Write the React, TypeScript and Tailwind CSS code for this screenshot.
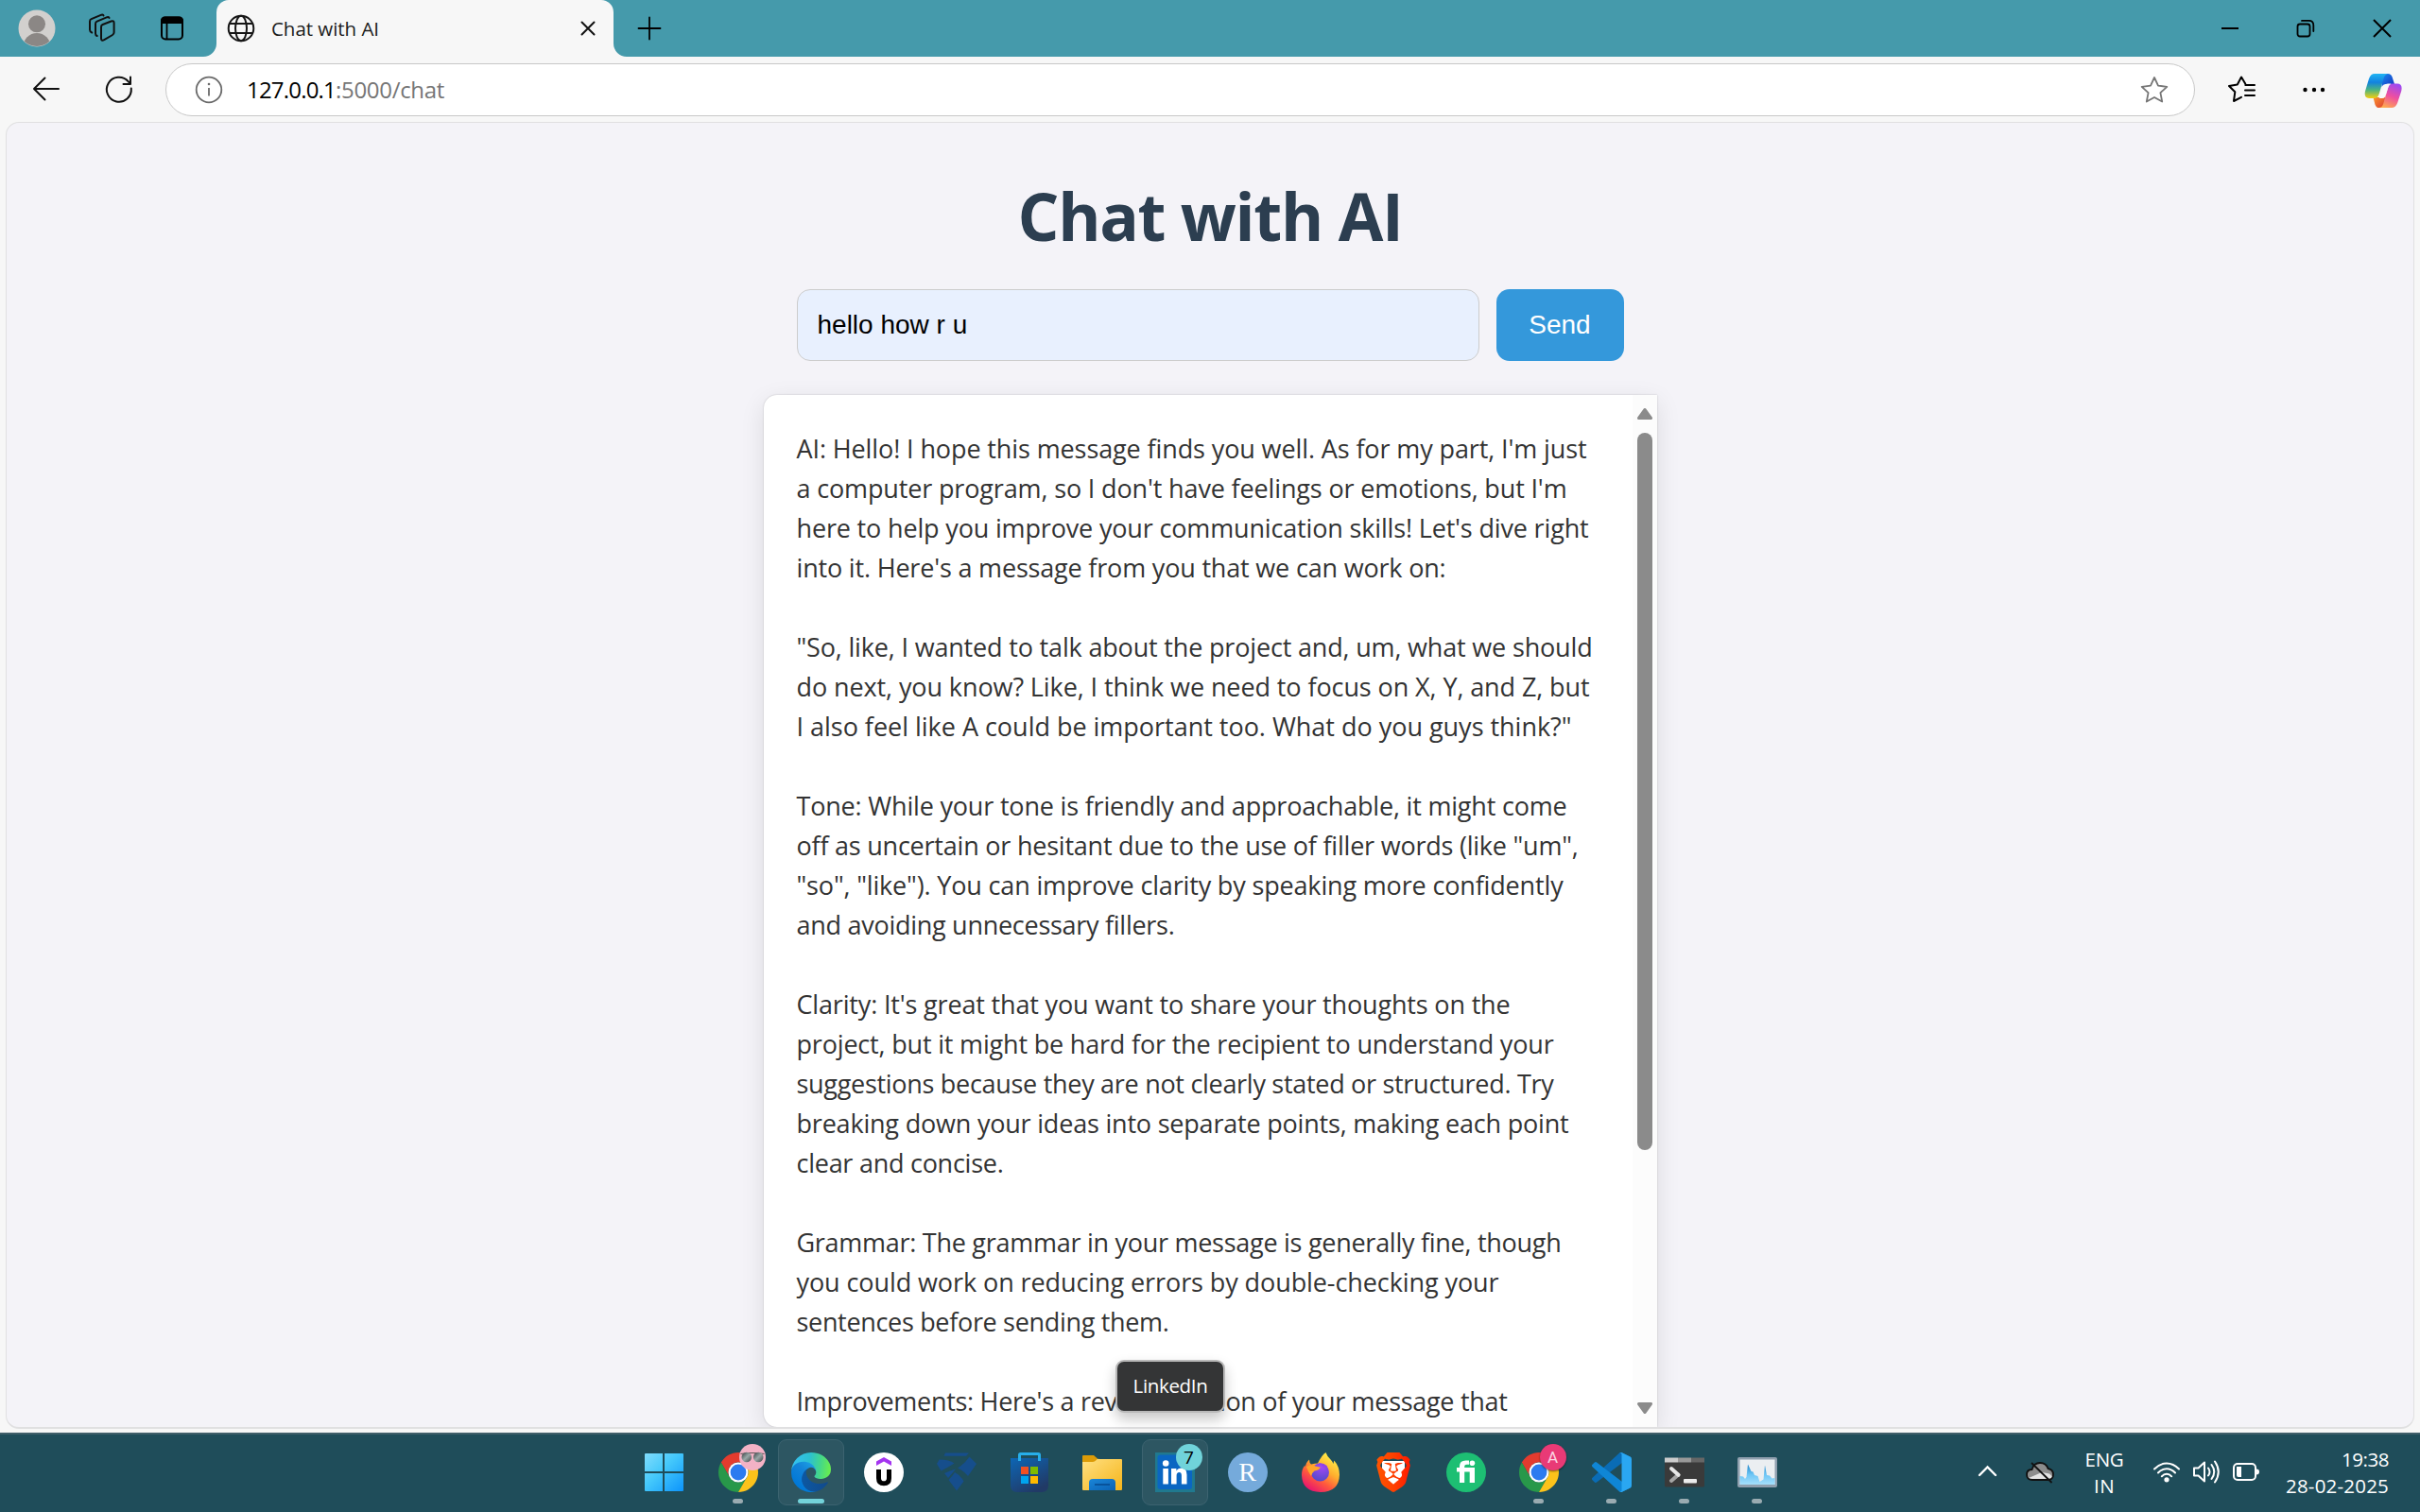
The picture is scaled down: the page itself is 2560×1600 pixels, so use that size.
import React, { useLayoutEffect, useRef, useState } from "react";
import { SiBrave } from "react-icons/si";

/* Text on one line, with tracking spread so that it fills the given width. */
function Fit({ w, children, className = "" }: { w: number; children: string; className?: string }) {
  const ref = useRef<HTMLSpanElement>(null);
  const [spacing, setSpacing] = useState(0);
  useLayoutEffect(() => {
    const el = ref.current;
    if (el) setSpacing((w - el.getBoundingClientRect().width) / children.length);
  }, []);
  return (
    <span ref={ref} className={`inline-block whitespace-pre ${className}`} style={{ letterSpacing: spacing }}>
      {children}
    </span>
  );
}

const message: [string, number][][] = [
  [
    ["AI: Hello! I hope this message finds you well. As for my part, I'm just", 836],
    ["a computer program, so I don't have feelings or emotions, but I'm", 815],
    ["here to help you improve your communication skills! Let's dive right", 838],
    ["into it. Here's a message from you that we can work on:", 687],
  ],
  [
    ["\"So, like, I wanted to talk about the project and, um, what we should", 842],
    ["do next, you know? Like, I think we need to focus on X, Y, and Z, but", 839],
    ["I also feel like A could be important too. What do you guys think?\"", 820],
  ],
  [
    ["Tone: While your tone is friendly and approachable, it might come", 815],
    ["off as uncertain or hesitant due to the use of filler words (like \"um\",", 827],
    ["\"so\", \"like\"). You can improve clarity by speaking more confidently", 811],
    ["and avoiding unnecessary fillers.", 400],
  ],
  [
    ["Clarity: It's great that you want to share your thoughts on the", 755],
    ["project, but it might be hard for the recipient to understand your", 801],
    ["suggestions because they are not clearly stated or structured. Try", 801],
    ["breaking down your ideas into separate points, making each point", 817],
    ["clear and concise.", 219],
  ],
  [
    ["Grammar: The grammar in your message is generally fine, though", 809],
    ["you could work on reducing errors by double-checking your", 743],
    ["sentences before sending them.", 394],
  ],
  [["Improvements: Here's a revised version of your message that", 752]],
];

/* ---------- browser frame ---------- */

function TitleBar() {
  return (
    <div className="flex h-[60px] shrink-0 items-center bg-[#459aab]">
      <svg className="ml-[19px] size-[40px]" viewBox="0 0 40 40">
        <defs>
          <clipPath id="av"><circle cx="20" cy="20" r="19" /></clipPath>
        </defs>
        <circle cx="20" cy="20" r="19.5" fill="#d2d0ce" />
        <g clipPath="url(#av)" fill="#8b8785">
          <circle cx="20" cy="15.3" r="9" />
          <circle cx="20" cy="39.5" r="14.5" />
        </g>
      </svg>
      <svg className="ml-[34px] size-[32px]" viewBox="0 0 32 32" fill="none" stroke="#111" strokeWidth="2" strokeLinejoin="round" strokeLinecap="round">
        <path d="M14 14.500q0-1.800 1.600-2.500l9-3.500q3-1 3 1.800v10q0 1.800-1.600 2.700l-8.800 5.200q-3.200 1.500-3.200-1.500z" />
        <path d="M9.700 24q-1.700-.7-1.700-2.600V11.200q0-1.800 1.600-2.500l10.800-4.500q1.700-.6 2.100.9" />
        <path d="M4.200 20.500q-2.200-.9-2.200-2.900V8.700q0-1.800 1.600-2.500l10.800-4.500q1.700-.6 2.100.9" />
      </svg>
      <svg className="ml-[43px] size-[28px]" viewBox="0 0 28 28">
        <rect x="3" y="2.500" width="22" height="23" rx="4" fill="none" stroke="#000" strokeWidth="2" />
        <path d="M2 9V6q0-4.500 4.500-4.500h15Q26 1.500 26 6v3z" />
        <path d="M8.500 9v16" stroke="#000" strokeWidth="1.800" />
      </svg>
      <div className="relative ml-[33px] flex h-[60px] w-[420px] items-center rounded-t-[13px] bg-[#f7f7f7]">
        <svg className="absolute bottom-0 -left-[14px] size-[14px]" viewBox="0 0 14 14"><path d="M14 0v14H0A14 14 0 0 0 14 0z" fill="#f7f7f7" /></svg>
        <svg className="absolute -right-[14px] bottom-0 size-[14px]" viewBox="0 0 14 14"><path d="M0 0v14h14A14 14 0 0 1 0 0z" fill="#f7f7f7" /></svg>
        <svg className="ml-[11px] size-[30px]" viewBox="0 0 30 30" fill="none" stroke="#161616" strokeWidth="2">
          <circle cx="15" cy="15" r="13.300" />
          <ellipse cx="15" cy="15" rx="6" ry="13.300" />
          <path d="M2.500 10h25M2.500 20h25" />
        </svg>
        <div className="ml-[17px] w-[320px] text-[20.500px] leading-[30px] text-[#1b1b1b]"><Fit w={114}>Chat with AI</Fit></div>
        <svg className="ml-[6px] size-[18px]" viewBox="0 0 18 18" stroke="#111" strokeWidth="2" strokeLinecap="round"><path d="M2.500 2.500l13 13M15.500 2.500l-13 13" /></svg>
      </div>
      <svg className="ml-[25px] size-[26px]" viewBox="0 0 26 26" stroke="#000" strokeWidth="1.800" strokeLinecap="round"><path d="M13 1.500v23M1.500 13h23" /></svg>
      <div className="ml-auto flex items-center">
        <svg className="size-[20px]" viewBox="0 0 20 20"><path d="M1 10h18" stroke="#000" strokeWidth="2" /></svg>
        <svg className="ml-[60px] size-[20px]" viewBox="0 0 20 20" fill="none" stroke="#000" strokeWidth="1.800" strokeLinecap="round">
          <rect x="1.500" y="5.500" width="13" height="13" rx="2.500" />
          <path d="M6 1.900h7.500q4.800 0 4.800 4.800V13" />
        </svg>
        <svg className="mr-[30px] ml-[61px] size-[20px]" viewBox="0 0 20 20" stroke="#000" strokeWidth="2"><path d="M1 1l18 18M19 1L1 19" /></svg>
      </div>
    </div>
  );
}

function CopilotIcon() {
  return (
    <svg className="mt-px ml-[41px] h-[38px] w-[40px]" viewBox="0 0 40 38">
      <defs>
        <linearGradient id="cpa" x1="0" y1="0" x2="0" y2="1"><stop offset="0" stopColor="#21b5f3" /><stop offset=".35" stopColor="#1282e0" /><stop offset=".65" stopColor="#49b383" /><stop offset="1" stopColor="#f5cf10" /></linearGradient>
        <linearGradient id="cpb" x1=".7" y1="0" x2=".3" y2="1"><stop offset="0" stopColor="#9f49f0" /><stop offset=".5" stopColor="#ee4fa0" /><stop offset="1" stopColor="#ffab4d" /></linearGradient>
        <linearGradient id="cpc" x1="0" y1="0" x2="1" y2="1"><stop offset="0" stopColor="#1d8cf0" /><stop offset="1" stopColor="#1430bd" /></linearGradient>
        <linearGradient id="cpd" x1="0" y1="0" x2="1" y2="1"><stop offset="0" stopColor="#ffa030" /><stop offset="1" stopColor="#dc3c30" /></linearGradient>
      </defs>
      <path d="M19 1h6q3.500 0 4.600 3.600L32 12h-9q-3 0-4.500 3z" fill="url(#cpc)" />
      <path d="M21 37h-5q-3.500 0-4.600-3.600L9.500 26h8.500q3 0 4.500-3z" fill="url(#cpd)" />
      <path d="M11 1h15q-4 0-5.300 4.500l-5 17Q14.300 27 10.500 27H5q-5.500 0-4-7.500l4-13.200Q6.800 1 11 1z" fill="url(#cpa)" />
      <path d="M29 37H15q4 0 5.300-4.500l4.700-16Q26.200 11.500 30 11.500h5q6 0 4.200 8l-4 12.200Q33.300 37 29 37z" fill="url(#cpb)" />
      <path d="M21.500 13.500q1-2 3.500-2h3.500q-2.500 1-3.500 5L22 25.500q-.8 1.500-3 1.500h-3.500q2-1.500 2.500-4z" fill="#fafafa" />
    </svg>
  );
}

function Toolbar() {
  return (
    <div className="flex h-[69px] shrink-0 items-center bg-[#f7f7f7] pt-[1px]">
      <svg className="ml-[33px] size-[32px]" viewBox="0 0 32 32" fill="none" stroke="#111" strokeWidth="2" strokeLinecap="round" strokeLinejoin="round"><path d="M29 15H3M14.500 3.500L3 15l11.500 11.500" /></svg>
      <svg className="ml-[45px] size-[32px]" viewBox="0 0 32 32" fill="none" stroke="#111" strokeWidth="2" strokeLinecap="round" strokeLinejoin="round"><path d="M28.800 14.500A13 13 0 1 1 25.500 7l2 2.500M28 2.500V10h-7.500" /></svg>
      <div className="ml-[33px] flex h-[56px] w-[2147px] items-center rounded-full border border-[#c8c8c8] bg-white">
        <svg className="ml-[30px] size-[30px]" viewBox="0 0 30 30" fill="none" stroke="#6b6b6b" strokeWidth="1.800">
          <circle cx="15" cy="15" r="13.300" />
          <path d="M15 13v8.500" />
          <circle cx="15" cy="9" r="1.300" fill="#6b6b6b" stroke="none" />
        </svg>
        <div className="ml-[25px] flex w-[600px] text-[24px] leading-[34px] text-[#767676]">
          <Fit w={94} className="text-black">127.0.0.1</Fit>
          <Fit w={115}>:5000/chat</Fit>
        </div>
        <svg className="mr-[27px] ml-auto size-[30px]" viewBox="0 0 30 30" fill="none" stroke="#767676" strokeWidth="1.800" strokeLinejoin="round">
          <path d="M15 2l4 8.600 9.300 1.200-6.900 6.400 1.800 9.300L15 23l-8.200 4.500 1.800-9.300-6.900-6.400L11 10.600z" />
        </svg>
      </div>
      <svg className="ml-[34px] size-[30px]" viewBox="0 0 30 30" fill="none" stroke="#000" strokeWidth="2" strokeLinecap="round" strokeLinejoin="round">
        <path d="M19.300 8.800L15 1.500l-4.200 8L2 11l6.300 6.300L7 27l8-4.200M19.300 10H29M19 15.500h10M19 21h10" />
      </svg>
      <svg className="ml-[50px] size-[24px]" viewBox="0 0 24 24"><circle cx="2.500" cy="12" r="2.200" /><circle cx="12" cy="12" r="2.200" /><circle cx="21" cy="12" r="2.200" /></svg>
      <CopilotIcon />
    </div>
  );
}

/* ---------- page ---------- */

function ChatPage() {
  return (
    <div className="mx-[6px] flex h-[1383px] shrink-0 flex-col items-center overflow-hidden rounded-[14px] border border-b-2 border-[#e0e0e1] bg-[#f4f3f8]">
      <h1 className="mt-[56px] text-[69px] leading-[84px] font-bold text-[#2c3e50]"><Fit w={407}>Chat with AI</Fit></h1>
      <div className="mt-[36px] flex gap-[18px] font-['Liberation_Sans',sans-serif] text-[28px]">
        <div className="flex h-[76px] w-[722px] items-center rounded-[14px] border border-[#cccccc] bg-[#e8f0fe] pl-[21px] text-black">hello how r u</div>
        <button className="h-[76px] w-[135px] rounded-[14px] bg-[#3498db] text-white">Send</button>
      </div>
      <div className="mt-[36px] flex h-[1092px] w-[945px] shrink-0 rounded-l-[14px] bg-white shadow-[0_7px_26px_rgba(0,0,0,0.1),0_0_2px_rgba(0,0,0,0.2)]">
        <div className="flex w-[919px] flex-col gap-[42px] overflow-hidden pt-[36px] pl-[35px] text-[27px] leading-[42px] text-[#333333]">
          {message.map((para, i) => (
            <div key={i} className="flex shrink-0 flex-col">
              {para.map(([line, w]) => (
                <div key={line} className="h-[42px]"><Fit w={w}>{line}</Fit></div>
              ))}
            </div>
          ))}
        </div>
        <div className="flex w-[26px] flex-col items-center bg-[#fcfcfc] pt-[14px]">
          <svg className="h-[12px] w-[16px]" viewBox="0 0 16 12"><path d="M8 1.500L14.500 10.500h-13z" fill="#8b8b8b" stroke="#8b8b8b" strokeWidth="3" strokeLinejoin="round" /></svg>
          <div className="mt-[14px] h-[759px] w-[16px] rounded-full bg-[#8b8b8b]" />
          <svg className="mt-auto mb-[14px] h-[12px] w-[16px]" viewBox="0 0 16 12"><path d="M8 10.500L14.500 1.500h-13z" fill="#8b8b8b" stroke="#8b8b8b" strokeWidth="3" strokeLinejoin="round" /></svg>
        </div>
      </div>
    </div>
  );
}

/* ---------- taskbar ---------- */

const Windows = () => (
  <svg className="size-[42px]" viewBox="0 0 42 42">
    <defs><linearGradient id="win" x1="0" y1="0" x2="42" y2="42" gradientUnits="userSpaceOnUse"><stop offset="0" stopColor="#84defc" /><stop offset=".45" stopColor="#44c8fb" /><stop offset="1" stopColor="#0b93fb" /></linearGradient></defs>
    <g fill="url(#win)">
      <path d="M2 1h18v19H1V2q0-1 1-1zM22 1h19q1 0 1 1v18H22zM1 22h19v19H2q-1 0-1-1zM22 22h20v18q0 1-1 1H22z" />
    </g>
  </svg>
);

const Chrome = () => (
  <svg className="size-[42px]" viewBox="0 0 48 48">
    <path d="M24 12H44.780A24 24 0 0 0 3.220 12L13.600 30A12 12 0 0 1 24 12z" fill="#e33b2e" />
    <path d="M13.600 30L3.220 12A24 24 0 0 0 24 48L34.400 30A12 12 0 0 1 13.600 30z" fill="#28984a" />
    <path d="M34.400 30L24 48A24 24 0 0 0 44.780 12H24A12 12 0 0 1 34.400 30z" fill="#fcc31b" />
    <circle cx="24" cy="24" r="12" fill="#fff" />
    <circle cx="24" cy="24" r="9.600" fill="#2b7bf0" />
  </svg>
);

const ChromeCool = () => (
  <div className="relative">
    <Chrome />
    <svg className="absolute -top-[9px] left-[22px] size-[28px]" viewBox="0 0 28 28">
      <defs><linearGradient id="lens" x1="0" y1="0" x2="1" y2="1"><stop offset="0" stopColor="#333a3d" /><stop offset=".5" stopColor="#9aa8a8" /><stop offset="1" stopColor="#3b4042" /></linearGradient></defs>
      <circle cx="14" cy="14" r="14" fill="#f3b2c6" />
      <path d="M1.500 10.500Q14 8.500 26.500 10.500" stroke="#5d5557" strokeWidth="1.200" fill="none" />
      <circle cx="7.800" cy="14" r="5.300" fill="url(#lens)" />
      <circle cx="20.200" cy="14" r="5.300" fill="url(#lens)" />
    </svg>
  </div>
);

const ChromeA = () => (
  <div className="relative">
    <Chrome />
    <div className="absolute -top-[9px] left-[22px] flex size-[28px] items-center justify-center rounded-full bg-[#e93a76] font-['Roboto',sans-serif] text-[17px] leading-none text-[#fbd5e2] shadow-[0_1px_2px_rgba(0,0,0,0.5)]">A</div>
  </div>
);

const Edge = () => (
  <svg className="size-[42px]" viewBox="0 0 256 256">
    <defs>
      <linearGradient id="ea" x1="63" y1="177" x2="241" y2="177" gradientUnits="userSpaceOnUse"><stop offset="0" stopColor="#0c59a4" /><stop offset="1" stopColor="#114a8b" /></linearGradient>
      <linearGradient id="eb" x1="157" y1="95" x2="46" y2="220" gradientUnits="userSpaceOnUse"><stop offset="0" stopColor="#1b9de2" /><stop offset=".4" stopColor="#1383d8" /><stop offset="1" stopColor="#0078d7" /></linearGradient>
      <linearGradient id="ec" x1="10" y1="80" x2="250" y2="110" gradientUnits="userSpaceOnUse"><stop offset="0" stopColor="#35c1f1" /><stop offset=".45" stopColor="#2cc0d0" /><stop offset=".75" stopColor="#44d78a" /><stop offset="1" stopColor="#66eb53" /></linearGradient>
    </defs>
    <g transform="translate(-4.630 -4.920)">
      <path fill="url(#ea)" d="M235.680 195.460a93.730 93.730 0 0 1-10.540 4.710 101.870 101.870 0 0 1-35.900 6.460c-47.320 0-88.540-32.550-88.540-74.320A31.480 31.480 0 0 1 117.130 105c-42.800 1.800-53.800 46.400-53.800 72.530 0 73.880 68.090 81.370 82.760 81.370 7.910 0 19.840-2.300 27-4.560l1.310-.44a128.340 128.340 0 0 0 66.600-52.800 4 4 0 0 0-5.320-5.640z" />
      <path fill="url(#eb)" d="M110.340 246.340A79.200 79.200 0 0 1 87.600 225a80.720 80.720 0 0 1 29.530-120c3.120-1.470 8.450-4.130 15.540-4a32.350 32.350 0 0 1 25.690 13 31.880 31.880 0 0 1 6.360 18.660c0-.21 24.460-79.600-80-79.600-43.900 0-80 41.660-80 78.210a130.150 130.150 0 0 0 12.110 56 128 128 0 0 0 156.380 67.110 75.550 75.550 0 0 1-62.780-8z" />
      <path fill="url(#ec)" d="M156.940 153.780c-.81 1.050-3.300 2.500-3.300 5.660 0 2.610 1.700 5.120 4.720 7.230 14.380 10 41.490 8.680 41.560 8.680a59.560 59.560 0 0 0 30.270-8.350 61.380 61.380 0 0 0 30.430-52.880c.26-22.410-8-37.310-11.340-43.910C228.090 28.760 182.350 4.920 132.610 4.920a128 128 0 0 0-128 126.200c.48-36.540 36.800-66.050 80-66.050 3.500 0 23.460.34 42 10.070 16.340 8.580 24.900 18.940 30.850 29.210 6.180 10.670 7.280 24.150 7.280 29.520s-2.740 13.330-7.800 19.910z" />
    </g>
  </svg>
);

const Udemy = () => (
  <svg className="size-[42px]" viewBox="0 0 42 42">
    <circle cx="21" cy="21" r="21" fill="#fff" />
    <path d="M21 5l8 4.600V14l-8-4.600L13 14V9.600z" fill="#a435f0" />
    <path d="M15.500 18v9.200q0 5.600 5.500 5.600t5.500-5.600V18" fill="none" stroke="#000" strokeWidth="5" />
  </svg>
);

const Gem = () => (
  <svg className="size-[42px]" viewBox="0 0 42 42" fill="#164e8c">
    <path d="M9 .5h25l-3 3.200H7.500z" />
    <path d="M2.500 7.500q11 0 16 4-7 4.500-14 8L0 12z" />
    <path d="M34.500 4.500L42 12l-9 13q-5-6-11-8.500 8-5 12.500-12z" />
    <path d="M8 22q6-3 12-4.500-4 5-8 9.500z" />
    <path d="M19 21q6 3 9.500 9.500L21 40.500 12.500 29q4-4 6.500-8z" />
  </svg>
);

const Store = () => (
  <svg className="size-[42px]" viewBox="0 0 42 42">
    <defs>
      <linearGradient id="st" x1="0" y1="0" x2=".6" y2="1"><stop offset="0" stopColor="#0d66b5" /><stop offset="1" stopColor="#213a66" /></linearGradient>
    </defs>
    <path d="M1 6h40v29q0 7-7 7H8q-7 0-7-7z" fill="url(#st)" />
    <path d="M10.500 9V2.500q0-1 1-1h19q1 0 1 1V9" fill="none" stroke="#27aeea" strokeWidth="3" />
    <path d="M12 15h8v8h-8z" fill="#f25022" /><path d="M22 15h8v8h-8z" fill="#7fba00" />
    <path d="M12 25h8v8h-8z" fill="#00a4ef" /><path d="M22 25h8v8h-8z" fill="#ffb900" />
  </svg>
);

const Explorer = () => (
  <svg className="size-[42px]" viewBox="0 0 42 42">
    <defs>
      <linearGradient id="fo" x1="0" y1="0" x2="1" y2="1"><stop offset="0" stopColor="#ffe082" /><stop offset="1" stopColor="#f6b51a" /></linearGradient>
      <linearGradient id="fb" x1="0" y1="0" x2="1" y2="1"><stop offset="0" stopColor="#1a86d8" /><stop offset="1" stopColor="#0b62b4" /></linearGradient>
    </defs>
    <path d="M0 4q0-1 1-1h11l4 3.500V14H0z" fill="#dc9b07" />
    <path d="M0 10h11q2 0 3.500-1.800T18 7h23q1 0 1 1v31q0 1-1 1H1q-1 0-1-1z" fill="url(#fo)" />
    <path d="M7 40v-8q0-4 4-4h20q4 0 4 4v8z" fill="url(#fb)" />
    <path d="M13 34h16" stroke="#06498c" strokeWidth="1.500" />
  </svg>
);

const LinkedIn = () => (
  <div className="relative">
    <svg className="size-[42px]" viewBox="0 0 42 42">
      <path d="M0 0h42v42H0z" fill="#20798f" />
      <rect x="2.500" y="2.500" width="36.500" height="36.500" rx="3" fill="#0a66c2" />
      <circle cx="11.200" cy="11.500" r="3.300" fill="#fff" />
      <path d="M8.300 17h5.600v16.500H8.300zM17 17h5.400v2.400q1.700-2.900 5.400-2.900 5.700 0 5.700 7v10h-5.600v-9q0-3.400-2.500-3.400-2.800 0-2.800 3.600v8.800H17z" fill="#fff" />
    </svg>
    <div className="absolute -top-[9px] left-[22px] flex size-[28px] items-center justify-center rounded-full bg-[#70d3da] text-[19px] leading-none text-black">7</div>
  </div>
);

const RStudio = () => (
  <div className="flex size-[42px] items-center justify-center rounded-full bg-[#75aadb] font-['Liberation_Serif',serif] text-[28px] leading-none text-white">R</div>
);

const Firefox = () => (
  <svg className="size-[42px]" viewBox="0 0 42 42">
    <defs>
      <linearGradient id="ff" x1="33" y1="6" x2="10" y2="40" gradientUnits="userSpaceOnUse"><stop offset="0" stopColor="#ffe645" /><stop offset=".35" stopColor="#ffae2e" /><stop offset=".65" stopColor="#ff5a3c" /><stop offset="1" stopColor="#e8156f" /></linearGradient>
      <radialGradient id="fp" cx=".6" cy=".2" r=".9"><stop offset="0" stopColor="#a347f5" /><stop offset="1" stopColor="#4a4bc4" /></radialGradient>
    </defs>
    <path d="M26.500 0q1.500 4.500 5.500 8 1.500 1.500 2.500 4l.8-3.500Q41 15 41 23.500 40.500 42 21 42 1.500 41.500 1 24q0-7 3.500-10.500l.3 2Q5.500 10.500 9 7.500q0 3.500 2 5 4-1 7-1Q22 3 26.500 0z" fill="url(#ff)" />
    <circle cx="20.500" cy="21" r="9.500" fill="url(#fp)" />
    <path d="M6 15q6-3 9.500-.5l5.500 1.200q-1.500 3-6.500 3.800-3 2.500-3.500 5.500Q7.500 20 6 15z" fill="#ffa52a" />
    <path d="M18 11.500q6-1 9.500 2.500l1 3q-2.500-2-5-1.800-1-2.500-5.500-3.700z" fill="#9043e8" />
  </svg>
);

const Brave = () => (
  <div className="relative size-[42px]">
    <svg className="absolute inset-0 size-[42px]" viewBox="0 0 42 42">
      <defs><linearGradient id="br" x1="0" y1="0" x2="1" y2="0"><stop offset="0" stopColor="#ff5500" /><stop offset=".5" stopColor="#ff4000" /><stop offset="1" stopColor="#ff1a00" /></linearGradient></defs>
      <path d="M9 9h24v20l-12 8-12-8z" fill="#fff" />
    </svg>
    <SiBrave className="absolute inset-0 size-[42px] [&_path]:fill-[url(#br)]" />
  </div>
);

const Fiverr = () => (
  <svg className="size-[42px]" viewBox="0 0 42 42">
    <circle cx="21" cy="21" r="21" fill="#1dbf73" />
    <path d="M11 16h3v-1.500q0-6 6.500-6H24v4.300h-2.500q-2.300 0-2.300 2V16H30v16h-5.300V20.500h-5.500V32H14V20.500h-3z" fill="#fff" />
    <circle cx="27.400" cy="11.300" r="2.800" fill="#fff" />
  </svg>
);

const VSCode = () => (
  <svg className="size-[42px]" viewBox="0 0 100 100">
    <path fill="#0a6cb5" d="M96.461 10.796L75.857.876a6.230 6.230 0 0 0-7.107 1.207L1.299 63.583a4.167 4.167 0 0 0 .004 6.162l5.510 5.010a4.167 4.167 0 0 0 5.321.236L93.361 13.370C96.086 11.303 100 13.246 100 16.667v-.24c0-2.400-1.375-4.589-3.539-5.631z" />
    <path fill="#0f86d6" d="M96.461 89.204l-20.604 9.920a6.230 6.230 0 0 1-7.107-1.207L1.299 36.417a4.167 4.167 0 0 1 .004-6.162l5.510-5.010a4.167 4.167 0 0 1 5.321-.236L93.361 86.630C96.086 88.697 100 86.754 100 83.333v.24c0 2.400-1.375 4.589-3.539 5.631z" />
    <path fill="#2aa7f2" d="M75.858 99.126a6.230 6.230 0 0 1-7.108-1.209C71.056 100.223 75 98.590 75 95.328V4.672C75 1.410 71.056-.223 68.750 2.083A6.230 6.230 0 0 1 75.858.874l20.601 9.907A6.250 6.250 0 0 1 100 16.413v67.174a6.250 6.250 0 0 1-3.541 5.633z" />
  </svg>
);

const Terminal = () => (
  <svg className="size-[42px]" viewBox="0 0 42 42">
    <path d="M0 5.500h14v6H0z" fill="#cccccc" /><path d="M14 5.500h14v6H14z" fill="#999999" /><path d="M28 5.500h14v6H28z" fill="#666666" />
    <path d="M0 10.500h42V35q0 1.500-1.500 1.500h-39Q0 36.500 0 35z" fill="#3a3a3a" />
    <path d="M7 30l7.500-6.500" stroke="#a5a5a5" strokeWidth="4" strokeLinecap="round" />
    <path d="M7 17l7.500 6.800" stroke="#e6e6e6" strokeWidth="4" strokeLinecap="round" />
    <rect x="20" y="28" width="14" height="4.500" rx="1" fill="#ececec" />
  </svg>
);

const TaskManager = () => (
  <svg className="size-[42px]" viewBox="0 0 42 42">
    <defs><linearGradient id="tm" x1="0" y1="0" x2="0" y2="1"><stop offset="0" stopColor="#1c83c8" /><stop offset=".5" stopColor="#6cc5f5" /><stop offset="1" stopColor="#a5e0fc" /></linearGradient></defs>
    <rect x="0" y="5" width="42" height="32" rx="2" fill="#8f9fae" />
    <path d="M2.500 7.500h37V34h-37z" fill="#ebeef1" />
    <path d="M2.500 34v-9l3.500.5 2 2.500 1.500-2L11 12.500 14.500 20l2 .500L18 24l3.500 1 2 6 4-2.500 1.500-15 2 10.500 3 .5 2.500 3 3-.5v7z" fill="url(#tm)" />
  </svg>
);

type App = { icon: () => React.ReactElement; bar?: "on" | "small"; lit?: boolean };
const apps: App[] = [
  { icon: ChromeCool, bar: "small" },
  { icon: Edge, bar: "on", lit: true },
  { icon: Udemy },
  { icon: Gem },
  { icon: Store },
  { icon: Explorer },
  { icon: LinkedIn, lit: true },
  { icon: RStudio },
  { icon: Firefox },
  { icon: Brave },
  { icon: Fiverr },
  { icon: ChromeA, bar: "small" },
  { icon: VSCode, bar: "small" },
  { icon: Terminal, bar: "small" },
  { icon: TaskManager, bar: "small" },
];

function Tray() {
  return (
    <div className="ml-auto flex items-center text-[20.500px] leading-[28px] text-white">
      <svg className="size-[22px]" viewBox="0 0 22 22" fill="none" stroke="#fff" strokeWidth="2.400" strokeLinecap="round"><path d="M3 14l8.500-8.500L20 14" /></svg>
      <svg className="ml-[30px] h-[26px] w-[30px]" viewBox="0 0 30 26">
        <path d="M7 21Q1 21 1 15.500T6.500 10Q8.500 3 15 3t8.500 6Q29 10 29 15.500 29 21 23 21z" fill="#8d8d8d" />
        <path d="M3 19l14-6 8 1.500 3 3Q27 21 23 21H7q-3 0-4-2z" fill="#e4e4e4" />
        <path d="M7 21Q1 21 1 15.500T6.500 10Q8.500 3 15 3t8.500 6Q29 10 29 15.500 29 21 23 21z" fill="none" stroke="#111" strokeWidth="1.800" />
        <path d="M6 3l21.500 21" stroke="#111" strokeWidth="1.800" />
      </svg>
      <div className="ml-[32px] flex w-[42px] flex-col items-center">
        <Fit w={41}>ENG</Fit>
        <Fit w={22}>IN</Fit>
      </div>
      <svg className="ml-[30px] size-[30px]" viewBox="0 0 30 30" fill="none" stroke="#fff" strokeWidth="2" strokeLinecap="round">
        <path d="M2 11.500Q8 5.500 15 5.500t13 6M6 15.500q4-4.300 9-4.300t9 4.300M9.800 19.300q2.200-2.500 5.200-2.500t5.200 2.500" />
        <circle cx="15" cy="22.800" r="2.600" fill="#fff" stroke="none" />
      </svg>
      <svg className="ml-[12px] size-[30px]" viewBox="0 0 30 30" fill="none" stroke="#fff" strokeWidth="2" strokeLinecap="round" strokeLinejoin="round">
        <path d="M2 10.500h4.500L13 4.500v20l-6.500-6H2z" />
        <path d="M17 10.500q3 4 0 8M20.500 7q5.500 7.500 0 15M24 3.500q7.500 11 0 22" />
      </svg>
      <svg className="ml-[12px] size-[30px]" viewBox="0 0 30 30" fill="none" stroke="#fff" strokeWidth="2">
        <rect x="2" y="6" width="23" height="17" rx="4" />
        <path d="M5 9h5v11H7q-2 0-2-2z" fill="#fff" stroke="none" />
        <path d="M26 11.500q3 0 3 3t-3 3z" fill="#fff" stroke="none" />
      </svg>
      <div className="mr-[33px] ml-[26px] flex w-[110px] flex-col items-end">
        <Fit w={50}>19:38</Fit>
        <Fit w={109}>28-02-2025</Fit>
      </div>
    </div>
  );
}

function Taskbar() {
  return (
    <div className="flex h-[84px] shrink-0 items-center border-t-2 border-[#405f6a] bg-[#1f4d5a] pb-[2px]">
      <div className="ml-[661px] flex w-[81px] justify-center"><Windows /></div>
      {apps.map(({ icon: Icon, bar, lit }, i) => (
        <div key={i} className="flex w-[77px] justify-center">
          <div className={`relative flex size-[70px] items-center justify-center rounded-[9px] ${lit ? "border border-[#3c6370] bg-[#2d5662]" : ""}`}>
            <Icon />
            {bar === "on" && <div className="absolute bottom-[1px] h-[5px] w-[28px] rounded-full bg-[#73d3da]" />}
            {bar === "small" && <div className="absolute bottom-[2px] h-[5px] w-[11px] rounded-full bg-[#9aabb1]" />}
          </div>
        </div>
      ))}
      <Tray />
    </div>
  );
}

export default function App() {
  return (
    <div className="relative flex h-[1600px] w-[2560px] flex-col overflow-hidden bg-[#f7f7f7] font-['Open_Sans','Noto_Sans',sans-serif]">
      <TitleBar />
      <Toolbar />
      <ChatPage />
      <div className="h-[4px] shrink-0 bg-[#f7f7f7]" />
      <Taskbar />
      <div className="absolute top-[1439px] left-[1180px] flex h-[56px] w-[116px] items-center justify-center rounded-[9px] border-2 border-[#b9b9b9] bg-[#343536] pb-px text-[20.500px] text-white shadow-[0_7px_14px_rgba(0,0,0,0.22)]">
        <Fit w={79}>LinkedIn</Fit>
      </div>
    </div>
  );
}
